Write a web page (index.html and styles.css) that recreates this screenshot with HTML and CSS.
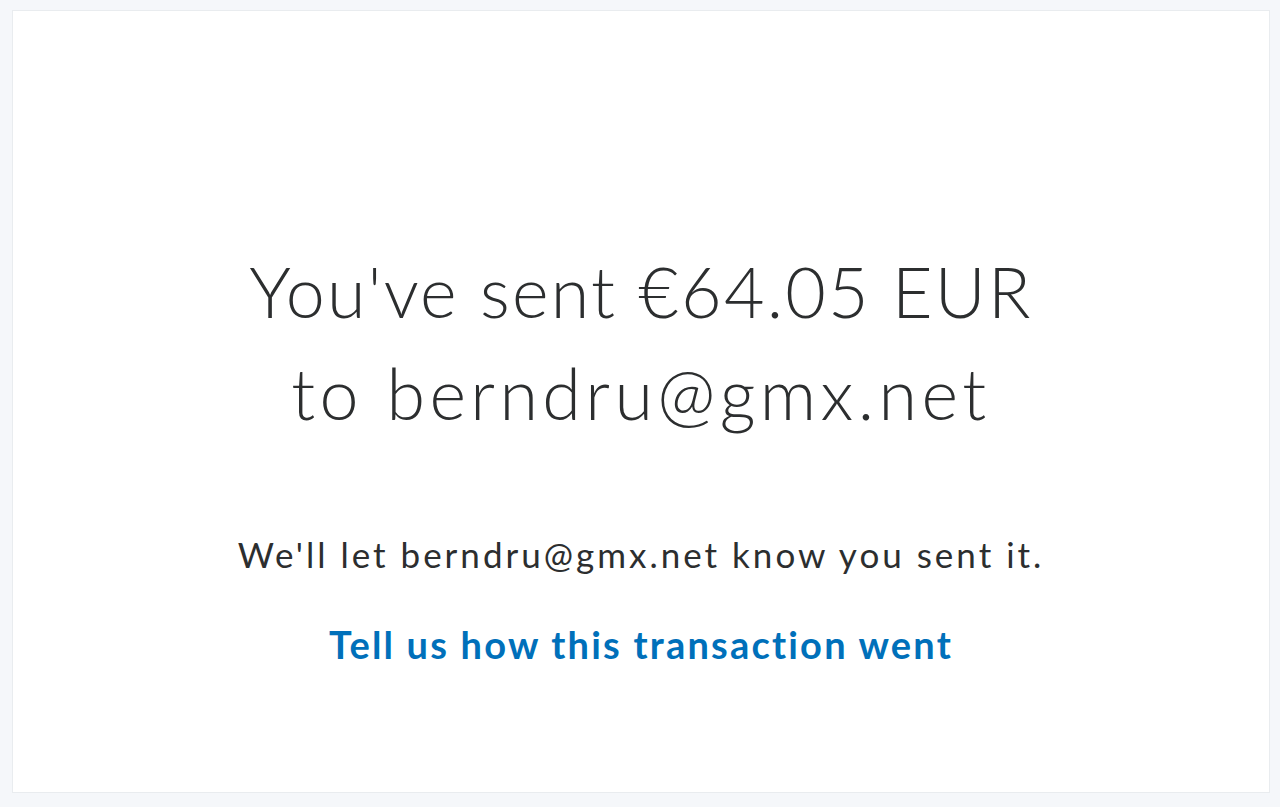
FILE: index.html
```html
<!DOCTYPE html>
<html lang="en">
<head>
<meta charset="utf-8">
<title>Payment sent</title>
<link rel="stylesheet" href="styles.css">
</head>
<body>
<main class="card">
  <div class="content">
    <h1 class="title"><span class="title-line">You've sent €64.05 EUR</span><span class="title-line title-line-lower">to berndru@gmx.net</span></h1>
    <p class="note">We'll let berndru@gmx.net know you sent it.</p>
    <a class="feedback" href="#">Tell us how this transaction went</a>
  </div>
</main>
</body>
</html>
```

FILE: styles.css
```css
html, body {
  margin: 0;
  padding: 0;
}
body {
  background: #f5f7fa;
  font-family: Lato, "Open Sans", sans-serif;
  font-variant-ligatures: none;
  color: #2c2e2f;
  padding: 10px 10px 14px 12px;
  height: 807px;
  box-sizing: border-box;
}
.card {
  background: #ffffff;
  border: 1px solid #e9ecef;
  height: 100%;
  box-sizing: border-box;
  display: flex;
  flex-direction: column;
  align-items: center;
}
.content {
  display: flex;
  flex-direction: column;
  align-items: center;
  text-align: center;
  padding-top: 229px;
}
.title {
  margin: 0;
  font-weight: 300;
  font-size: 70px;
  line-height: 102px;
  letter-spacing: 2.2px;
  color: #2c2e2f;
}
.title-line {
  display: block;
}
.title-line-lower {
  letter-spacing: 4.4px;
}
.note {
  margin: 88px 0 0;
  font-size: 35px;
  line-height: 44px;
  letter-spacing: 3px;
  color: #2c2e2f;
}
.feedback {
  margin-top: 44px;
  font-size: 38px;
  line-height: 48px;
  font-weight: 700;
  letter-spacing: 2.2px;
  color: #0070ba;
  text-decoration: none;
}
```
